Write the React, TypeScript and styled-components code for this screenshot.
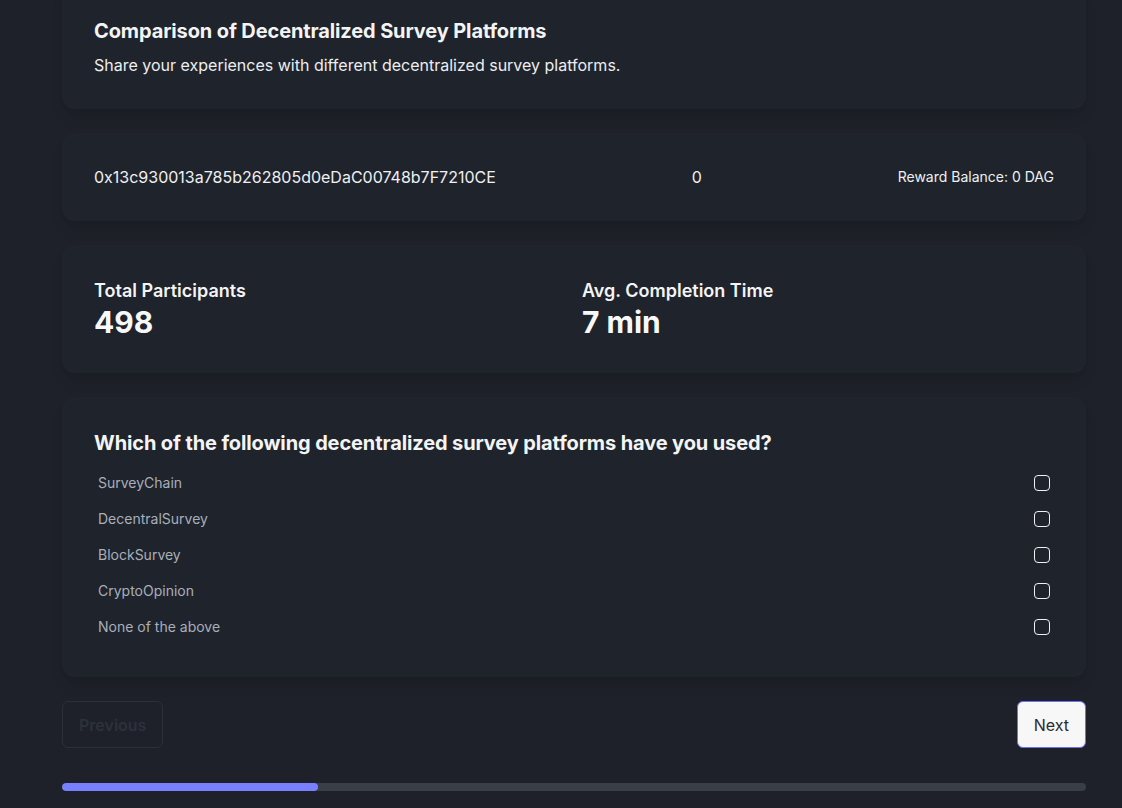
import React from "react";
import styled, { createGlobalStyle } from "styled-components";

const Global = createGlobalStyle`
  html, body { margin: 0; padding: 0; background: #1e2129; }
  body { font-family: Inter, "Noto Sans", sans-serif; color: #f1f3f5; }
  * { box-sizing: border-box; }
`;

const Viewport = styled.div`
  height: 808px;
  overflow: hidden;
  display: flex;
  flex-direction: column;
  justify-content: flex-end;
  padding: 0 36px 17px 62px;
  background: #1e2129;
`;

const Column = styled.div`
  width: 1024px;
  display: flex;
  flex-direction: column;
  flex-shrink: 0;
`;

const Card = styled.section`
  background: #1f232b;
  border-radius: 12px;
  padding: 32px;
  margin-bottom: 24px;
  box-shadow: 0 10px 15px -3px rgba(0, 0, 0, 0.1), 0 4px 6px -2px rgba(0, 0, 0, 0.05);
`;

const Title = styled.h2`
  margin: 0 0 8px;
  font-size: 20px;
  line-height: 28px;
  font-weight: 700;
  letter-spacing: -0.12px;
  color: #f3f4f6;
`;

const Subtitle = styled.p`
  margin: 0;
  font-size: 16px;
  line-height: 24px;
  color: #eceef1;
`;

const WalletRow = styled.div`
  display: flex;
  justify-content: space-between;
  align-items: center;
  height: 24px;
`;

const Address = styled.span`
  font-size: 16px;
  color: #eef0f3;
`;

const Balance = styled.span`
  font-size: 14px;
  color: #eef0f3;
`;

const StatsGrid = styled.div`
  display: grid;
  grid-template-columns: 1fr 1fr;
  gap: 16px;
`;

const Stat = styled.div`
  display: flex;
  flex-direction: column;
`;

const StatLabel = styled.span`
  font-size: 18px;
  line-height: 27px;
  font-weight: 600;
  color: #f3f4f6;
`;

const StatValue = styled.span`
  font-size: 30px;
  line-height: 37.5px;
  font-weight: 700;
  color: #f7f8fa;
`;

const Option = styled.label`
  display: flex;
  justify-content: space-between;
  align-items: center;
  padding: 8px 4px;
  font-size: 14px;
  line-height: 20px;
  color: #a7afbb;
`;

const Box = styled.span`
  width: 16px;
  height: 16px;
  border: 1.5px solid #eef0f3;
  border-radius: 4px;
`;

const Actions = styled.div`
  display: flex;
  justify-content: space-between;
  margin-bottom: 35px;
`;

const Button = styled.button<{ $primary?: boolean }>`
  height: 47px;
  padding: 0 16px;
  font-family: Inter, "Noto Sans", sans-serif;
  font-size: 16px;
  border-radius: 6px;
  border: 1px solid ${(p) => (p.$primary ? "#6a72f5" : "#2a2f38")};
  background: ${(p) => (p.$primary ? "#f7f7f8" : "transparent")};
  color: ${(p) => (p.$primary ? "#2b2b2f" : "#2c313b")};
  font-weight: ${(p) => (p.$primary ? 400 : 600)};
`;

const Track = styled.div`
  height: 8px;
  border-radius: 4px;
  background: #3a3f47;
  overflow: hidden;
`;

const Fill = styled.div`
  height: 100%;
  border-radius: 4px;
  background: #7980ff;
`;

const options = ["SurveyChain", "DecentralSurvey", "BlockSurvey", "CryptoOpinion", "None of the above"];

export default function App() {
  const progress = 25;
  return (
    <>
      <Global />
      <Viewport>
        <Column>
          <Card>
            <Title>Comparison of Decentralized Survey Platforms</Title>
            <Subtitle>Share your experiences with different decentralized survey platforms.</Subtitle>
          </Card>
          <Card>
            <WalletRow>
              <Address>0x13c930013a785b262805d0eDaC00748b7F7210CE</Address>
              <Address>0</Address>
              <Balance>Reward Balance: 0 DAG</Balance>
            </WalletRow>
          </Card>
          <Card>
            <StatsGrid>
              <Stat>
                <StatLabel>Total Participants</StatLabel>
                <StatValue>498</StatValue>
              </Stat>
              <Stat>
                <StatLabel>Avg. Completion Time</StatLabel>
                <StatValue>7 min</StatValue>
              </Stat>
            </StatsGrid>
          </Card>
          <Card>
            <Title>Which of the following decentralized survey platforms have you used?</Title>
            {options.map((o) => (
              <Option key={o}>
                {o}
                <Box />
              </Option>
            ))}
          </Card>
          <Actions>
            <Button disabled>Previous</Button>
            <Button $primary>Next</Button>
          </Actions>
          <Track>
            <Fill style={{ width: `${progress}%` }} />
          </Track>
        </Column>
      </Viewport>
    </>
  );
}
